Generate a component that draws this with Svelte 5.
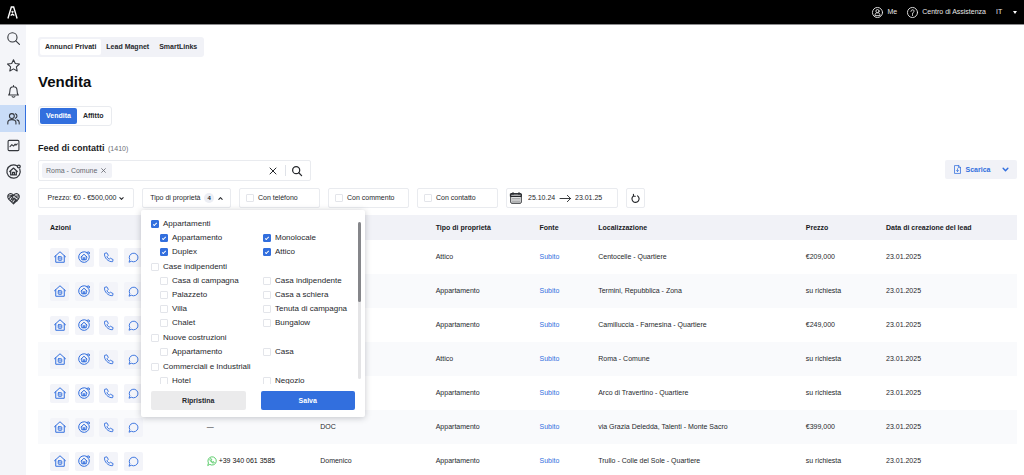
<script lang="ts">
  type Option = { label: string; checked: boolean };
  type Group = Option & { items: Option[] };

  let groups: Group[] = $state([
    {
      label: 'Appartamenti',
      checked: true,
      items: [
        { label: 'Appartamento', checked: true },
        { label: 'Monolocale', checked: true },
        { label: 'Duplex', checked: true },
        { label: 'Attico', checked: true }
      ]
    },
    {
      label: 'Case indipendenti',
      checked: false,
      items: [
        { label: 'Casa di campagna', checked: false },
        { label: 'Casa indipendente', checked: false },
        { label: 'Palazzeto', checked: false },
        { label: 'Casa a schiera', checked: false },
        { label: 'Villa', checked: false },
        { label: 'Tenuta di campagna', checked: false },
        { label: 'Chalet', checked: false },
        { label: 'Bungalow', checked: false }
      ]
    },
    {
      label: 'Nuove costruzioni',
      checked: false,
      items: [
        { label: 'Appartamento', checked: false },
        { label: 'Casa', checked: false }
      ]
    },
    {
      label: 'Commerciali e Industriali',
      checked: false,
      items: [
        { label: 'Hotel', checked: false },
        { label: 'Negozio', checked: false }
      ]
    }
  ]);

  let open = $state(true);
  let selected = $derived(groups.flatMap((g) => g.items).filter((i) => i.checked).length);

  function reset() {
    for (const g of groups) {
      g.checked = false;
      for (const i of g.items) i.checked = false;
    }
  }

  const flags = ['Con teléfono', 'Con commento', 'Con contatto'];
  const nav = ['search', 'star', 'bell', 'users', 'chart', 'homeCircle', 'handshake'];
  const actions = ['house', 'homeCircle', 'phone', 'chat'];

  const rows = [
    { phone: '', name: '', type: 'Attico', place: 'Centocelle - Quartiere', price: '€209,000' },
    { phone: '', name: '', type: 'Appartamento', place: 'Termini, Repubblica - Zona', price: 'su richiesta' },
    { phone: '', name: '', type: 'Appartamento', place: 'Camilluccia - Farnesina - Quartiere', price: '€249,000' },
    { phone: '', name: '', type: 'Attico', place: 'Roma - Comune', price: 'su richiesta' },
    { phone: '', name: '', type: 'Appartamento', place: 'Arco di Travertino - Quartiere', price: 'su richiesta' },
    { phone: '—', name: 'DOC', type: 'Appartamento', place: 'via Grazia Deledda, Talenti - Monte Sacro', price: '€399,000' },
    { phone: '+39 340 061 3585', name: 'Domenico', type: 'Appartamento', place: 'Trullo - Colle del Sole - Quartiere', price: 'su richiesta' }
  ];
</script>

{#snippet icon(name: string)}
  <svg class="icon i-{name}" viewBox="0 0 24 24" aria-hidden="true">
    {#if name === 'search'}
      <circle cx="10" cy="10" r="8.500" /><path d="M16.200 16.200 23 23" />
    {:else if name === 'star'}
      <path d="M12 1.300 15.300 8.300l7.700.900-5.700 5.200 1.500 7.600-6.800-3.800-6.800 3.800 1.500-7.600L1 9.200l7.700-.9z" />
    {:else if name === 'bell'}
      <path d="M3 18.500c1.800-1.700 2.400-3.400 2.400-8C5.400 6 8 3.200 12 3.200s6.600 2.800 6.600 7.300c0 4.600.6 6.300 2.400 8zM9.500 21.500c1.500 1.200 3.500 1.200 5 0M12 1v2" />
    {:else if name === 'users'}
      <circle cx="9" cy="7.500" r="4.500" /><path d="M1.500 22v-2.500c0-3.500 2.500-5.500 7.500-5.500s7.500 2 7.500 5.500V22M15.500 3.300a4.500 4.500 0 0 1 0 8.400M18.500 14.500c2.700.6 4 2.300 4 5V22" />
    {:else if name === 'chart'}
      <rect x="2" y="2.500" width="20" height="19" rx="2" /><path d="m5.500 14 3.500-3.500 3 2.500 3-3.500 1.500 2 2.500-2.500" />
    {:else if name === 'homeCircle'}
      <path d="M17.500 2.800A10.700 10.700 0 1 0 22 8" /><path d="m6 12 6-5.500L18 12M7.500 11v6.500h9V11M10.500 17.500v-4h3v4" /><circle cx="20.500" cy="4" r="2.300" />
    {:else if name === 'handshake'}
      <path d="M12 22 3 13C0 9.500 1 4.500 5 3.200c2.800-.8 5 .4 7 2.500 2-2.100 4.200-3.300 7-2.500 4 1.300 5 6.300 2 9.800zM2 8l4-1 6-1 4 2 6-1M3 13l5-5 3 1-3 4c2 1 4 0 5-2l6 5M6 16l3-3M9 18l3-4M12 20l3-4M14 13l4 4M16 9l5 3" />
    {:else if name === 'house'}
      <path d="M1 11.500 12 1.500l11 10M3.500 9.500V22.500h17V9.500" /><rect x="8.500" y="11.500" width="7" height="7" rx="1" /><path d="M12 14v2" />
    {:else if name === 'phone'}
      <path d="M7.500 2 3.500 3C1.500 12 12 22.500 21 21l1-4.500-6-3-2.500 2.200C11.500 14.500 9.500 12.500 8.500 10.500L11 8z" />
    {:else if name === 'chat'}
      <path d="M2.500 21.500 4 16.800A9.500 9.500 0 1 1 8 20.600z" />
    {:else if name === 'whatsapp'}
      <path d="M2 22l1.500-5.200A10 10 0 1 1 7.400 20.700z" /><path d="M8.500 6.500 7 8c0 4 5 9 9 9l1.500-1.800-3-2-1.500 1.300c-1.500-.7-2.500-1.700-3.200-3.200L11 10z" />
    {:else if name === 'close'}
      <path d="m3 3 18 18M21 3 3 21" />
    {:else if name === 'down'}
      <path d="m4 8 8 8 8-8" />
    {:else if name === 'up'}
      <path d="m4 16 8-8 8 8" />
    {:else if name === 'profile'}
      <circle cx="12" cy="12" r="11" /><circle cx="12" cy="9" r="3.500" /><path d="M6.500 18c0-3.500 2-5.500 5.500-5.500s5.500 2 5.500 5.500z" />
    {:else if name === 'help'}
      <circle cx="12" cy="12" r="11" /><path d="M8.500 9.500c0-4.500 7-4.500 7-.5 0 2.500-3.500 2.500-3.500 5.500M12 16.500v2" />
    {:else if name === 'download'}
      <path d="M14.500 1.500H4v21h16V7zM14.500 1.500V7H20M12 10v7M9 14.500l3 3 3-3" />
    {:else if name === 'calendar'}
      <rect x="1.500" y="3.500" width="21" height="19" rx="2" /><path class="solid" d="M1.500 3.500h21V9h-21z" /><path d="M6 1v4M18 1v4" /><path class="dots" d="M5 12.500h14M5 16h14M5 19.500h14" />
    {:else if name === 'arrow'}
      <path d="M0 12h23M16 5l7 7-7 7" />
    {:else if name === 'refresh'}
      <path d="M6 5.500A9.500 9.500 0 1 0 17.500 5M6.500 1v5h5" />
    {/if}
  </svg>
{/snippet}

<div class="app">
  <header class="topbar">
    <a class="logo" href="#home" aria-label="Home">
      <svg viewBox="0 0 24 28" aria-hidden="true">
        <path d="M2 27 9.500 2h5L22 27M8 20.500l4-3 4 3" />
        <circle cx="12" cy="12.500" r="1" />
      </svg>
    </a>
    <div class="account">
      <a href="#me">{@render icon('profile')}Me</a>
      <a href="#help">{@render icon('help')}Centro di Assistenza</a>
      <label class="lang">
        <select aria-label="Lingua"><option>IT</option></select>
        <svg viewBox="0 0 4 3" aria-hidden="true"><path d="M0 0h4L2 3z" /></svg>
      </label>
    </div>
  </header>

  <div class="body">
    <aside>
      <nav>
        {#each nav as n}
          <a href={`#${n}`} class:active={n === 'users'} aria-label={n}>{@render icon(n)}</a>
        {/each}
      </nav>
    </aside>

    <main>
      <div class="tabs">
        <button class="on">Annunci Privati</button>
        <button>Lead Magnet</button>
        <button>SmartLinks</button>
      </div>

      <h1>Vendita</h1>

      <div class="toggle">
        <button class="on">Vendita</button>
        <button>Affitto</button>
      </div>

      <h2>Feed di contatti <span>(1410)</span></h2>

      <div class="searchrow">
        <div class="search">
          <span class="tag">Roma - Comune <button aria-label="Rimuovi">{@render icon('close')}</button></span>
          <input type="text" aria-label="Cerca località" />
          <button class="clear" aria-label="Cancella">{@render icon('close')}</button>
          <button class="go" aria-label="Cerca">{@render icon('search')}</button>
        </div>
        <button class="export">{@render icon('download')}<span>Scarica</span>{@render icon('down')}</button>
      </div>

      <div class="filters">
        <button class="box price">Prezzo: €0 - €500,000 {@render icon('down')}</button>

        <div class="dropdown">
          <button class="box type" onclick={() => (open = !open)}>
            Tipo di proprietà <span class="count">{selected}</span>
            {@render icon('up')}
          </button>

          {#if open}
            <div class="panel">
              <div class="scroll">
                <div class="list">
                  {#each groups as g}
                    <label class="group"><input type="checkbox" bind:checked={g.checked} />{g.label}</label>
                    <div class="items">
                      {#each g.items as i}
                        <label><input type="checkbox" bind:checked={i.checked} />{i.label}</label>
                      {/each}
                    </div>
                  {/each}
                </div>
                <div class="track"><div class="thumb"></div></div>
              </div>
              <div class="buttons">
                <button onclick={reset}>Ripristina</button>
                <button class="save" onclick={() => (open = false)}>Salva</button>
              </div>
            </div>
          {/if}
        </div>

        {#each flags as f}
          <label class="box flag"><input type="checkbox" />{f}</label>
        {/each}

        <div class="box dates">
          {@render icon('calendar')}
          <input type="text" value="25.10.24" aria-label="Dal" />
          {@render icon('arrow')}
          <input type="text" value="23.01.25" aria-label="Al" />
        </div>

        <button class="box reload" aria-label="Aggiorna">{@render icon('refresh')}</button>
      </div>

      <table>
        <colgroup>
          <col class="c-actions" />
          <col class="c-phone" />
          <col class="c-name" />
          <col class="c-type" />
          <col class="c-source" />
          <col class="c-place" />
          <col class="c-price" />
          <col />
        </colgroup>
        <thead>
          <tr>
            <th>Azioni</th>
            <th></th>
            <th></th>
            <th>Tipo di proprietà</th>
            <th>Fonte</th>
            <th>Localizzazione</th>
            <th>Prezzo</th>
            <th>Data di creazione del lead</th>
          </tr>
        </thead>
        <tbody>
          {#each rows as r}
            <tr>
              <td>
                <div class="actions">
                  {#each actions as a}
                    <button aria-label={a}>{@render icon(a)}</button>
                  {/each}
                </div>
              </td>
              <td>
                {#if r.phone.startsWith('+')}
                  <div class="phone">{@render icon('whatsapp')}{r.phone}</div>
                {:else}
                  {r.phone}
                {/if}
              </td>
              <td>{r.name}</td>
              <td>{r.type}</td>
              <td><a href="#subito">Subito</a></td>
              <td>{r.place}</td>
              <td>{r.price}</td>
              <td>23.01.2025</td>
            </tr>
          {/each}
        </tbody>
      </table>
    </main>
  </div>
</div>

<style>
  :global(body) { margin: 0; }

  .app {
    --blue: #326fde;
    --line: #e9ebef;
    --soft: #f1f2f7;
    display: flex;
    flex-direction: column;
    height: 100vh;
    overflow: hidden;
    background: #fff;
    color: #26282c;
    font: 7px/10px "Liberation Sans", Arial, sans-serif;
  }
  .app *, .app *::before { box-sizing: border-box; }
  button, input, select { font: inherit; color: inherit; }
  button {
    display: inline-flex;
    align-items: center;
    justify-content: center;
    padding: 0;
    border: 0;
    background: none;
    white-space: nowrap;
    cursor: pointer;
  }
  a { color: inherit; text-decoration: none; }

  .icon {
    flex: none;
    width: 11px;
    height: 11px;
    fill: none;
    stroke: currentColor;
    stroke-width: 2;
    stroke-linecap: round;
    stroke-linejoin: round;
    overflow: visible;
  }
  .icon .solid { fill: currentColor; fill-opacity: 0.4; }
  .icon .dots { stroke-dasharray: 2 2; stroke-linecap: butt; }
  .i-down, .i-up { width: 5px; height: 5px; stroke-width: 5; }

  /* top bar */
  .topbar {
    flex: none;
    display: flex;
    align-items: center;
    justify-content: space-between;
    height: 25px;
    padding: 0 7px;
    border-bottom: 1px solid #8c8c8e;
    background: #000;
    color: #e8e8e8;
  }
  .logo svg {
    display: block;
    width: 11px;
    height: 13px;
    fill: #fff;
    stroke: #fff;
    stroke-width: 3;
  }
  .logo path { fill: none; }
  .account { display: flex; align-items: center; gap: 10px; }
  .account a { display: flex; align-items: center; gap: 4px; }
  .lang { display: flex; align-items: center; gap: 8px; }
  .lang select {
    appearance: none;
    width: 9px;
    padding: 0;
    border: 0;
    background: none;
  }
  .lang svg { width: 4px; height: 3px; fill: #fff; }

  .body { flex: 1; display: flex; min-height: 0; }

  /* side navigation */
  aside { flex: none; width: 26px; background: #f4f5f9; color: #33363c; }
  nav { display: grid; grid-auto-rows: 1fr; height: 187px; }
  nav a { display: flex; align-items: center; justify-content: center; }
  nav .active { background: #c9dcf7; box-shadow: inset -1px 0 var(--blue); }
  nav .icon { width: 13px; height: 13px; }
  nav .i-homeCircle { width: 15px; height: 15px; }

  main { flex: 1; min-width: 0; padding: 12px 7px 0 12px; }

  /* tabs and heading */
  .tabs {
    display: flex;
    width: fit-content;
    height: 20px;
    padding: 2px;
    border-radius: 3px;
    background: var(--soft);
    font-weight: bold;
  }
  .tabs button { padding: 0 5px; border-radius: 2px; }
  .tabs .on { background: #fff; }
  h1 { margin: 16px 0 15px; font-size: 15px; line-height: 18px; color: #0c0d0f; }
  .toggle {
    display: flex;
    width: fit-content;
    height: 20px;
    padding: 1px;
    border: 1px solid var(--line);
    border-radius: 3px;
    font-weight: bold;
  }
  .toggle button { padding: 0 6px; border-radius: 2px; }
  .toggle .on { background: var(--blue); color: #fff; }
  h2 { margin: 16px 0 5px; font-size: 9px; line-height: 12px; color: #1a1b1e; }
  h2 span { margin-left: 1px; font-size: 7px; font-weight: normal; color: #6d7077; }

  /* location search */
  .searchrow { display: flex; justify-content: space-between; align-items: flex-start; }
  .search {
    display: flex;
    align-items: center;
    width: 273px;
    height: 21px;
    padding: 0 8px 0 3px;
    border: 1px solid var(--line);
    border-radius: 2px;
  }
  .search input { flex: 1; min-width: 0; height: 15px; border: 0; outline: 0; background: none; }
  .tag {
    display: flex;
    align-items: center;
    gap: 4px;
    height: 15px;
    padding: 0 6px 0 4px;
    border-radius: 2px;
    background: var(--soft);
    color: #666970;
  }
  .tag .icon { width: 5px; height: 5px; stroke-width: 4; }
  .clear .icon { width: 8px; height: 8px; stroke-width: 3; }
  .go { margin-left: 8px; padding-left: 6px; height: 11px; border-left: 1px solid #dfe2e8; }
  .go .icon { width: 10px; height: 10px; stroke-width: 3; }
  .export {
    width: 72px;
    height: 19px;
    border-radius: 2px;
    background: var(--soft);
    color: var(--blue);
    font-weight: bold;
  }
  .export span { margin: 0 12px 0 4px; }
  .export .i-download { width: 9px; height: 9px; }
  .export .i-down { width: 7px; height: 7px; }

  /* filters */
  .filters { display: flex; gap: 8px; margin: 7px 0; }
  .box {
    display: flex;
    align-items: center;
    height: 20px;
    padding: 0 6px;
    border: 1px solid var(--line);
    border-radius: 2px;
    background: #fff;
  }
  .price { width: 96px; gap: 3px; }
  .type { width: 89px; gap: 4px; }
  .count { padding: 0 3px; border-radius: 5px; background: #eceef4; font-size: 6px; font-weight: bold; }
  .flag { width: 81px; gap: 4px; }
  .dates { width: 112px; padding: 0 3px; }
  .dates input { width: 32px; padding: 0; border: 0; background: none; }
  .i-calendar { width: 12px; height: 12px; margin-right: 6px; }
  .i-arrow { margin-right: 4px; }
  .reload { width: 19px; padding: 0; }
  .reload .icon { width: 9px; height: 9px; stroke-width: 3; }

  input[type="checkbox"] {
    appearance: none;
    flex: none;
    display: grid;
    place-items: center;
    width: 8px;
    height: 8px;
    margin: 0;
    border: 1px solid #e3e5ea;
    border-radius: 1px;
    background: #fff;
  }
  input[type="checkbox"]:checked { border-color: var(--blue); background: var(--blue); }
  input[type="checkbox"]:checked::before {
    content: "";
    width: 4px;
    height: 2px;
    border: solid #fff;
    border-width: 0 0 1px 1px;
    transform: rotate(-45deg);
  }

  .dropdown { position: relative; }
  .panel {
    position: absolute;
    z-index: 2;
    top: 22px;
    left: -1px;
    width: 224px;
    padding: 6px 4px 7px 10px;
    border-radius: 2px;
    background: #fff;
    box-shadow: 0 1px 6px rgba(30, 35, 50, 0.25);
    font-size: 8px;
  }
  .scroll { display: flex; height: 168px; overflow: hidden; }
  .list { flex: 1; min-width: 0; }
  .list label { display: flex; align-items: center; gap: 4px; height: 14px; white-space: nowrap; }
  .list .group { height: 15px; }
  .items { display: grid; grid-template-columns: 103px 1fr; padding-left: 9px; }
  .track { flex: none; width: 3px; height: 157px; margin-top: 6px; border-radius: 2px; background: #e4e4e6; }
  .thumb { height: 51%; border-radius: 2px; background: #85868a; }
  .buttons { display: flex; gap: 15px; padding: 7px 6px 0 0; font-size: 7px; font-weight: bold; }
  .buttons button { flex: 1; height: 19px; border-radius: 2px; background: #ebebec; }
  .buttons .save { background: var(--blue); color: #fff; }

  /* leads */
  table { width: 100%; table-layout: fixed; border-collapse: collapse; }
  .c-actions { width: 16%; }
  .c-phone { width: 11.6%; }
  .c-name { width: 11.8%; }
  .c-type { width: 10.6%; }
  .c-source { width: 6%; }
  .c-place { width: 21.2%; }
  .c-price { width: 8.2%; }
  th, td { padding: 0 0 0 12px; text-align: left; white-space: nowrap; }
  th { height: 25px; background: var(--soft); color: #1a1b1e; }
  td { height: 34px; }
  tbody tr:nth-child(even) { background: #f9fafc; }
  td a { color: var(--blue); }
  .actions { display: flex; justify-content: space-between; width: 93px; }
  .actions button { width: 19px; height: 19px; border-radius: 2px; background: #f3f4f9; color: var(--blue); }
  .actions .icon { width: 12px; height: 12px; }
  .actions .i-phone, .actions .i-chat { width: 11px; height: 11px; }
  .phone { display: flex; align-items: center; gap: 2px; color: #111; }
  .phone .icon { width: 10px; height: 10px; color: #3fc351; }
</style>
